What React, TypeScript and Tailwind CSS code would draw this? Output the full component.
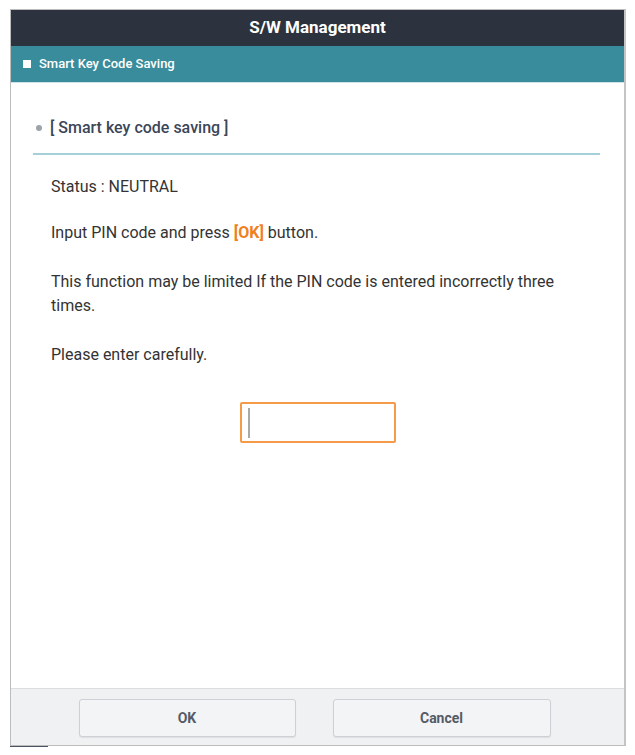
export default function App() {
  return (
    <div
      className="w-[635px] h-[755px] bg-white pt-[9px] pl-[10px]"
      style={{ fontFamily: "Roboto, 'Liberation Sans', sans-serif" }}
    >
      <div className="w-[616px] h-[737px] border border-[#bcbcbc] border-r-2 border-r-[#c4c4c4] flex flex-col">
        <header className="h-[36px] bg-[#2c333e] flex items-center justify-center text-white font-bold text-[17px]">
          S/W Management
        </header>
        <div className="h-[37px] bg-[#398c9b] flex items-center pl-[12px] gap-[8px] text-white text-[13px] font-medium border-b border-[#cfe3e7]">
          <span className="w-[8px] h-[8px] bg-white" />
          Smart Key Code Saving
        </div>

        <main className="flex-1 flex flex-col px-[22px] text-[16px] text-[#333]">
          <div className="mt-[35px] h-[20px] flex items-center gap-[8px] pl-[3px]">
            <span className="w-[6px] h-[6px] rounded-full bg-[#9ea3aa]" />
            <span className="text-[16px] font-medium text-[#3b4658] leading-[20px]">
              [ Smart key code saving ]
            </span>
          </div>
          <div className="mt-[15px] h-[2px] bg-[#a6d0d8] mr-[2px]" />

          <div className="pl-[18px] pr-[32px] flex flex-col leading-[24px]">
            <p className="mt-[20px]">Status : NEUTRAL</p>
            <p className="mt-[22px]">
              Input PIN code and press{" "}
              <span className="text-[#f07f1e] font-bold">[OK]</span> button.
            </p>
            <p className="mt-[25px]">
              This function may be limited If the PIN code is entered incorrectly three times.
            </p>
            <p className="mt-[25px]">Please enter carefully.</p>
          </div>

          <div className="mt-[35px] flex justify-center">
            <div className="w-[156px] h-[41px] border-2 border-[#f59a48] rounded-[2px] flex items-center pl-[6px]">
              <span className="w-[2px] h-[30px] bg-[#a9a9a9]" />
            </div>
          </div>
        </main>

        <footer className="h-[57px] bg-[#f0f1f3] border-t border-[#dcdde0] flex justify-center items-start pt-[10px] gap-[37px] pr-[6px]">
          <button className="w-[217px] h-[38px] rounded-[3px] border border-[#cdd0d4] bg-[#f3f4f6] shadow-[0_1px_1px_rgba(0,0,0,0.08)] text-[14px] font-bold text-[#555b66]">
            OK
          </button>
          <button className="w-[218px] h-[38px] rounded-[3px] border border-[#cdd0d4] bg-[#f3f4f6] shadow-[0_1px_1px_rgba(0,0,0,0.08)] text-[14px] font-bold text-[#555b66]">
            Cancel
          </button>
        </footer>
      </div>
      <div className="w-[38px] h-[1px] bg-[#4b5262]" />
    </div>
  );
}
